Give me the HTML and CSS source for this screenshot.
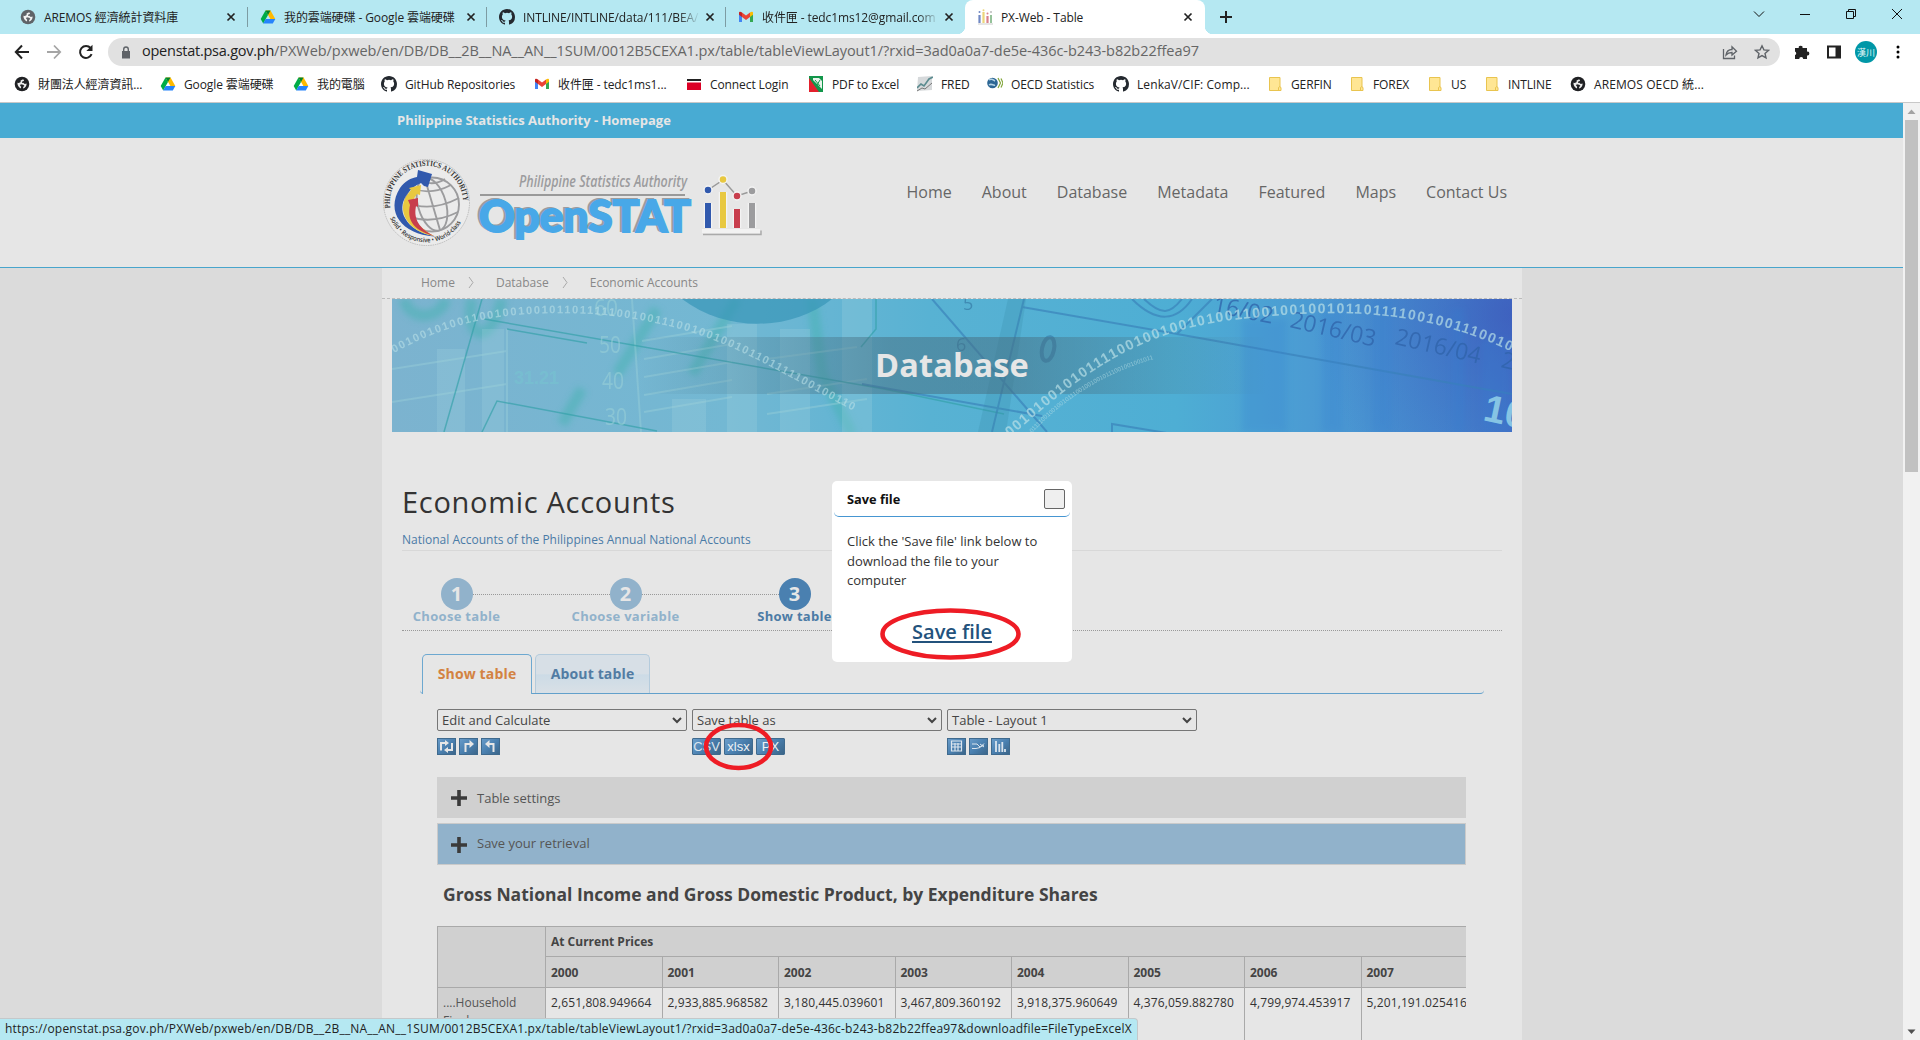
FILE: index.html
```html
<!DOCTYPE html>
<html lang="en">
<head>
<meta charset="utf-8">
<title>PX-Web - Table</title>
<link rel="stylesheet" href="styles.css">
</head>
<body>
<svg width="0" height="0" class="defs" aria-hidden="true">
  <defs>
    <symbol id="globe" viewBox="0 0 16 16"><circle cx="8" cy="8" r="7.300" fill="currentColor"/><path d="M8.500 2.300L6 3.800 6.500 5.500 4 6.800 2.300 6.500C2.200 10 4 12.500 6.500 13.500L7 11.500 5.500 9.800 6.500 8.300 9.500 8.800 11 10.300 9.500 11.800 9.300 13.600C12.500 12.800 14 10 13.700 7.500L11.500 8 9.500 6.500 8 6.800 8.300 5 10.300 4.300 10.500 2.800z" fill="#fff" opacity=".92" transform="translate(1.600 1.600) scale(.8)"/></symbol>
    <symbol id="drive" viewBox="0 0 16 16"><path d="M5.500 1.500h5L15.300 10h-4.900z" fill="#ffba00"/><path d="M5.500 1.500 8 5.900 3.200 14.400.7 10z" fill="#00ac47"/><path d="M5.600 10h9.700l-2.500 4.400H3.200z" fill="#2684fc"/><path d="M8 5.900 5.500 1.500h5z" fill="#00832d"/></symbol>
    <symbol id="github" viewBox="0 0 16 16"><path fill="#24292f" d="M8 0C3.580 0 0 3.580 0 8c0 3.540 2.290 6.530 5.470 7.590.4.070.55-.17.55-.38 0-.19-.01-.82-.01-1.490-2.010.37-2.530-.49-2.690-.94-.09-.23-.48-.94-.82-1.130-.28-.15-.68-.52-.01-.53.63-.01 1.080.58 1.230.82.72 1.210 1.870.87 2.330.66.070-.52.28-.87.51-1.070-1.780-.2-3.640-.89-3.640-3.950 0-.87.31-1.590.82-2.150-.08-.2-.36-1.020.08-2.120 0 0 .67-.21 2.200.82a7.420 7.420 0 0 1 4 0c1.530-1.040 2.200-.82 2.200-.82.44 1.100.16 1.920.08 2.120.51.56.82 1.270.82 2.150 0 3.070-1.870 3.750-3.650 3.950.29.25.54.73.54 1.480 0 1.070-.01 1.930-.01 2.200 0 .21.15.46.55.38A8.010 8.010 0 0 0 16 8c0-4.420-3.580-8-8-8"/></symbol>
    <symbol id="gmail" viewBox="0 0 16 16"><path d="M1 4v9h3V6.500z" fill="#4285f4"/><path d="M12 6.500V13h3V4z" fill="#34a853"/><path d="M4 3.500V8l4 3 4-3V3.500L8 6.500z" fill="#ea4335"/><path d="M1 3.700V5.800L4 8V3.500C2.600 2.300 1 2.700 1 3.700" fill="#c5221f"/><path d="M15 3.700V5.800L12 8V3.500c1.400-1.200 3-.8 3 .2" fill="#fbbc04"/></symbol>
    <symbol id="folder" viewBox="0 0 16 16"><path d="M2.500 1.500h10.500v9.500l1 .5v3H2.500z" fill="#ffe694" stroke="#e9c44f"/><path d="M11.500 14.500v-3l1.500-1" fill="none" stroke="#e9c44f"/></symbol>
    <symbol id="cross" viewBox="0 0 10 10"><path d="M1.500 1.500l7 7M8.500 1.500l-7 7" stroke="#222" stroke-width="1.700"/></symbol>
    <symbol id="plus" viewBox="0 0 16 16"><path d="M8 0v16M0 8h16" stroke="#3a3a3a" stroke-width="3.600"/></symbol>
    <linearGradient id="btn" x1="0" y1="0" x2="1" y2="1"><stop offset="0" stop-color="#6a9dca"/><stop offset=".5" stop-color="#4a80b0"/><stop offset="1" stop-color="#3b6487"/></linearGradient>
  </defs>
</svg>

<div class="window">
  <header class="tabstrip">
    <div class="tab"><svg class="ico grey"><use href="#globe"/></svg><span class="tab-title">AREMOS 經濟統計資料庫</span><svg class="x"><use href="#cross"/></svg></div>
    <div class="tab"><svg class="ico"><use href="#drive"/></svg><span class="tab-title">我的雲端硬碟 - Google 雲端硬碟</span><svg class="x"><use href="#cross"/></svg></div>
    <div class="tab"><svg class="ico"><use href="#github"/></svg><span class="tab-title fade">INTLINE/INTLINE/data/111/BEA/</span><svg class="x"><use href="#cross"/></svg></div>
    <div class="tab last"><svg class="ico"><use href="#gmail"/></svg><span class="tab-title fade">收件匣 - tedc1ms12@gmail.com</span><svg class="x"><use href="#cross"/></svg></div>
    <div class="tab active"><svg class="ico" viewBox="0 0 16 16"><path d="M2.500 6v8" stroke="#7088c4" stroke-width="2.200"/><path d="M6.500 3v11" stroke="#ecd67a" stroke-width="2.200"/><path d="M10.500 7v7" stroke="#d9808b" stroke-width="2.200"/><path d="M14 6v8" stroke="#95c29a" stroke-width="2"/><path d="M1 15h15" stroke="#ccc"/><circle cx="2.500" cy="3" r="1" fill="#7088c4"/><circle cx="6.500" cy="1.200" r="1" fill="#ecd67a"/><circle cx="10.500" cy="4.500" r="1" fill="#d9808b"/><circle cx="14" cy="3" r="1" fill="#bbb"/></svg><span class="tab-title">PX-Web - Table</span><svg class="x"><use href="#cross"/></svg></div>
    <svg class="newtab" viewBox="0 0 14 14"><path d="M7 1v12M1 7h12" stroke="#222" stroke-width="2"/></svg>
    <div class="controls">
      <svg viewBox="0 0 12 12"><path d="M1 3.500l5 5 5-5" class="ln"/></svg>
      <svg viewBox="0 0 12 12"><path d="M1 6.500h10" class="ln"/></svg>
      <svg viewBox="0 0 12 12"><path d="M1.500 3.500h7v7h-7zM3.500 3.500v-2h7v7h-2" class="ln"/></svg>
      <svg viewBox="0 0 12 12"><path d="M1 1l10 10M11 1L1 11" class="ln"/></svg>
    </div>
  </header>

  <div class="toolbar">
    <svg class="nav-ico" viewBox="0 0 16 16"><path d="M15 8H2M8 1.500L1.800 8 8 14.500" fill="none" stroke="#222" stroke-width="2"/></svg>
    <svg class="nav-ico" viewBox="0 0 16 16"><path d="M1 8h13M8 1.500L14.200 8 8 14.500" fill="none" stroke="#a5a5a5" stroke-width="1.800"/></svg>
    <svg class="nav-ico" viewBox="0 0 16 16"><path d="M13.600 10.200A6 6 0 1 1 12.600 4" fill="none" stroke="#222" stroke-width="2"/><path d="M14.500.8v6.200H8.300z" fill="#222"/></svg>
    <div class="address">
      <svg class="lock" viewBox="0 0 10 13"><path d="M1 5h8v7.500H1z" fill="#5f6368"/><path d="M2.700 5.500V3.300a2.300 2.300 0 0 1 4.600 0v2.200" fill="none" stroke="#5f6368" stroke-width="1.400"/></svg>
      <span class="url"><b>openstat.psa.gov.ph</b>/PXWeb/pxweb/en/DB/DB__2B__NA__AN__1SUM/0012B5CEXA1.px/table/tableViewLayout1/?rxid=3ad0a0a7-de5e-436c-b243-b82b22ffea97</span>
      <svg class="a-ico" viewBox="0 0 16 16"><path d="M1.500 5v9.500h11v-3M4 11c.5-3.500 3-5.500 6-5.500V2.800l4.500 4.400L10 11V8.500c-3 0-4.500.8-6 2.500z" fill="none" stroke="#5f6368" stroke-width="1.300"/></svg>
      <svg class="a-ico" viewBox="0 0 16 16"><path d="M8 1.800l1.900 4.100 4.500.5-3.400 3 1 4.400L8 11.600l-4 2.200 1-4.400-3.400-3 4.500-.5z" fill="none" stroke="#5f6368" stroke-width="1.400"/></svg>
    </div>
    <div class="tools">
      <svg class="t-ico" viewBox="0 0 16 16"><path d="M1 4h3.800a1.900 1.900 0 1 1 3.700 0H13v3.700a1.900 1.900 0 1 1 0 3.700V15H9.200a2 2 0 0 0-4 0H1v-3.900a2 2 0 0 0 0-3.700z" fill="#222"/></svg>
      <svg class="t-ico" viewBox="0 0 16 16"><path d="M2 2.500h12v11H2z" fill="none" stroke="#222" stroke-width="2"/><path d="M9.500 2h5v12h-5z" fill="#222"/></svg>
      <span class="avatar">漢川</span>
      <svg class="t-ico" viewBox="0 0 16 16"><circle cx="8" cy="3" r="1.500"/><circle cx="8" cy="8" r="1.500"/><circle cx="8" cy="13" r="1.500"/></svg>
    </div>
  </div>

  <nav class="bookmarks">
    <span class="bm"><svg class="ico dark"><use href="#globe"/></svg>財團法人經濟資訊...</span>
    <span class="bm"><svg class="ico"><use href="#drive"/></svg>Google 雲端硬碟</span>
    <span class="bm"><svg class="ico"><use href="#drive"/></svg>我的電腦</span>
    <span class="bm"><svg class="ico"><use href="#github"/></svg>GitHub Repositories</span>
    <span class="bm"><svg class="ico"><use href="#gmail"/></svg>收件匣 - tedc1ms1...</span>
    <span class="bm"><svg class="ico" viewBox="0 0 16 16"><path d="M1 5h14v9H1z" fill="#dc0025"/><path d="M1 3h14v2H1z" fill="#222"/><path d="M1 5h14v1.500H1z" fill="#fff"/></svg>Connect Login</span>
    <span class="bm"><svg class="ico" viewBox="0 0 16 16"><path d="M1 0h14v16H1z" fill="#12964a"/><path d="M1 2l10 14H1z" fill="#e3202c"/><path d="M5 2h6l3 3v8L5 4z" fill="#e9f4ec"/><path d="M7 4l5 6M12 4L9 9" stroke="#12964a"/></svg>PDF to Excel</span>
    <span class="bm"><svg class="ico" viewBox="0 0 16 16"><path d="M1 1l14-1v14L0 15z" fill="#d6d9db"/><path d="M0 12l4-4 3 2 5-7 4-2" stroke="#5b8b8f" fill="none" stroke-width="1.600"/><path d="M0 15l5-3 3 1 7-6" stroke="#777" fill="none"/></svg>FRED</span>
    <span class="bm"><svg class="ico" viewBox="0 0 16 16"><circle cx="5.500" cy="7" r="5.300" fill="#2c6694"/><path d="M2 4c3-2 4 0 6 1M2 9c3-2 4 1 6 0" stroke="#b5d3e6" fill="none" stroke-width="1.500"/><path d="M11 2l2.500 5L11 12M14 2.500L16 7l-2 4.500" fill="none" stroke="#83a63c" stroke-width="1.200"/></svg>OECD Statistics</span>
    <span class="bm wide"><svg class="ico"><use href="#github"/></svg>LenkaV/CIF: Comp...</span>
    <span class="bm"><svg class="ico"><use href="#folder"/></svg>GERFIN</span>
    <span class="bm"><svg class="ico"><use href="#folder"/></svg>FOREX</span>
    <span class="bm"><svg class="ico"><use href="#folder"/></svg>US</span>
    <span class="bm"><svg class="ico"><use href="#folder"/></svg>INTLINE</span>
    <span class="bm wide"><svg class="ico dark"><use href="#globe"/></svg>AREMOS OECD 統...</span>
  </nav>

  <div class="viewport">
    <main class="page">
      <div class="topbar">Philippine Statistics Authority - Homepage</div>
      <div class="masthead">
        <svg class="logo" width="390" height="100" viewBox="380 153 390 100">
          <defs>
            <path id="arcTop" d="M390.200 208A36.700 36.700 0 1 1 462.800 208"/>
            <path id="arcBot" d="M390 218A39.500 39.500 0 0 0 463 218"/>
          </defs>
          <circle cx="426.500" cy="202.500" r="43" fill="#ebebeb" stroke="#aaa" stroke-width=".7" stroke-dasharray="1.500 .8"/>
          <g fill="none" stroke="#9c9c9e" stroke-width="1.900">
            <circle cx="432" cy="204.500" r="27"/>
            <ellipse cx="432" cy="204.500" rx="14" ry="27" transform="rotate(-16 432 204.500)"/>
            <path d="M425 179 440 230M412 188q18 8 39-3M405 202q25 11 54-4M407 216q25 9 51-4M419 180q14 7 26-1"/>
          </g>
          <path d="M434 236.500C402 234 385 212 400 188c5-7 11-10 17-11l1-7 14 4-4 13-4-1-3-3c-12 5-24 20-16 35 5 10 17 16 29 18z" fill="#3159ad"/>
          <path d="M434 236c-26-4-39-26-26-42l3-4-2-2 12-3-1 10-3-1c-8 10-10 27 17 42z" fill="#e8c840"/>
          <path d="M434 236c-22-6-27-17-24-31l-2-5 10-2v9l-2-1c-2 10 0 21 18 30z" fill="#c83e4d"/>
          <text class="seal-top"><textPath href="#arcTop" textLength="119" lengthAdjust="spacingAndGlyphs">PHILIPPINE STATISTICS AUTHORITY</textPath></text>
          <text class="seal-bot"><textPath href="#arcBot" textLength="88" lengthAdjust="spacingAndGlyphs">Solid • Responsive • World-class</textPath></text>
          <text x="519" y="187" class="logo-sub" textLength="168" lengthAdjust="spacingAndGlyphs">Philippine Statistics Authority</text>
          <path d="M480 195h205" stroke="#999" stroke-width="2"/>
          <g class="shade"><text x="477" y="231" class="logo-name" textLength="212" lengthAdjust="spacingAndGlyphs">OpenSTAT</text></g>
          <text x="479" y="232" class="logo-name" textLength="212" lengthAdjust="spacingAndGlyphs">OpenSTAT</text>
          <path d="M703 234.500h58v-4" fill="none" stroke="#aaa" stroke-width="1.500"/><path d="M702 231h58" stroke="#f2f2f2" stroke-width="4"/>
          <path d="M708 190l15-10 14 16 15-5" fill="none" stroke="#999" stroke-width="1.500"/>
          <path d="M708 203v25M723 192v36M737 209v19M752 203v25" stroke="#f3f3f3" stroke-width="8.500"/>
          <path d="M708 203v25" stroke="#3159ad" stroke-width="6"/><path d="M723 192v36" stroke="#e8c840" stroke-width="6"/><path d="M737 209v19" stroke="#c83e4d" stroke-width="6"/><path d="M752 203v25" stroke="#9c9c9e" stroke-width="6"/>
          <g stroke="#f3f3f3" stroke-width="1.500"><circle cx="708" cy="190" r="4" fill="#3159ad"/><circle cx="723" cy="179.500" r="4" fill="#e8c840"/><circle cx="737" cy="196" r="4" fill="#c83e4d"/><circle cx="752" cy="191" r="4" fill="#9c9c9e"/></g>
        </svg>
        <nav class="mainnav"><a>Home</a><a>About</a><a>Database</a><a>Metadata</a><a>Featured</a><a>Maps</a><a>Contact Us</a></nav>
      </div>

      <div class="container">
        <div class="crumbs"><span>Home</span><svg class="chev"><path d="M1 1l4 5.500L1 12"/></svg><span>Database</span><svg class="chev"><path d="M1 1l4 5.500L1 12"/></svg><span>Economic Accounts</span></div>
        <div class="banner">
          <svg class="banner-art" width="1120" height="133" viewBox="0 0 1120 133">
            <defs>
              <linearGradient id="sea"><stop offset="0" stop-color="#7cb3cf"/><stop offset=".3" stop-color="#73b8d3"/><stop offset=".48" stop-color="#58b2d3"/><stop offset=".7" stop-color="#4eaed4"/><stop offset=".82" stop-color="#4b9bd3"/><stop offset=".95" stop-color="#4587ce"/><stop offset="1" stop-color="#4579c9"/></linearGradient>
              <radialGradient id="deep" cx="1120" cy="15" r="200" gradientUnits="userSpaceOnUse"><stop offset="0" stop-color="#3a52b8" stop-opacity=".6"/><stop offset="1" stop-color="#3a62c0" stop-opacity="0"/></radialGradient>
              <linearGradient id="band"><stop offset="0" stop-color="#466f82" stop-opacity="0"/><stop offset=".4" stop-color="#466f82" stop-opacity=".52"/><stop offset=".6" stop-color="#466f82" stop-opacity=".52"/><stop offset="1" stop-color="#466f82" stop-opacity="0"/></linearGradient>
              <filter id="soft"><feGaussianBlur stdDeviation="3"/></filter>
              <path id="c1" d="M2 54C70 16 130 12 200 15C320 25 360 60 462 112"/>
              <path id="c2" d="M618 138C680 85 740 28 860 19C960 8 1040 14 1122 54"/>
              <path id="c3" d="M640 134Q690 80 765 59"/>
            </defs>
            <path d="M0 0h1120v133H0z" fill="url(#sea)"/>
            <path d="M0 0h1120v133H0z" fill="url(#deep)"/>
            <g fill="none" stroke="#45b2b0" stroke-width="11" opacity=".5" filter="url(#soft)"><path d="M12 0c5 22 35 22 42 0M80 0c-8 40 18 50 30 0M265 10L225 75M345 0l-45 75M190 90l-20 35M420 0l10 75 30 60"/></g>
            <path d="M290 0c45 34 110 32 150 0z" fill="#3795b8" opacity=".7"/>
            <g fill="#a3d4df" opacity=".25"><path d="M45 50h28v83H45zM90 30h22v103H90zM280 100h34v33h-34zM335 25h30v108h-30zM388 30h30v103h-30zM450 0h30v133h-30z"/></g>
            <g fill="none" stroke="#9ed1da" stroke-width="2" opacity=".4"><path d="M240 0l9 133M250 42l90-15M252 60l88-15M252 78l88-15M252 96l88-15M252 113l88-15M375 115l100-15M375 95l100-15M375 60l90-12M0 70l115-18M0 103l115-18M115 30v103"/></g>
            <g fill="none" stroke="#319fa7" stroke-width="1.500" opacity=".65"><path d="M90 0L52 133M92 20l400 70 120 25M90 133l15-31 160 30M115 30l80 14M484 0v30l-15 18"/></g>
            <g fill="none" stroke="#397fb8" stroke-width="2" opacity=".65"><path d="M540 0l115 133M632 0L600 133M630 8l155 27 35-35M740 0c25 25 45 22 60 0M752 0c18 17 26 15 38 0M785 35l335 60M720 133v-8l85 14M470 85l180 32"/></g>
            <path d="M586 133l30-133h18l-20 133z" fill="#388aa8" opacity=".25"/>
            <g fill="#3680d0" opacity=".25" filter="url(#soft)"><path d="M850 20h45v113h-45zM930 10h20v123h-20zM980 0h20v133h-20zM1060 10h12v123h-12zM1090 40h28v93h-28z"/></g>
            <g class="scale" fill="#9cd2d8" opacity=".55"><text x="202" y="17" textLength="24" lengthAdjust="spacingAndGlyphs">60</text><text x="207" y="54" textLength="22" lengthAdjust="spacingAndGlyphs">50</text><text x="210" y="90" textLength="22" lengthAdjust="spacingAndGlyphs">40</text><text x="213" y="126" textLength="22" lengthAdjust="spacingAndGlyphs">30</text></g>
            <g class="glyph" fill="#3477a3" opacity=".65"><text x="571" y="11">5</text><text x="564" y="52">6</text></g>
            <ellipse cx="656" cy="50" rx="6" ry="12" transform="rotate(12 656 50)" fill="none" stroke="#3477a3" stroke-width="4" opacity=".6"/>
            <g class="dates" fill="#2f63aa" opacity=".75"><text x="820" y="13" transform="rotate(11 820 13)">16/02</text><text x="897" y="28" transform="rotate(13 897 28)">2016/03</text><text x="1002" y="45" transform="rotate(13 1002 45)">2016/04</text><text x="1108" y="68" transform="rotate(13 1108 68)">2</text></g>
            <path d="M245 38h630v57H245z" fill="url(#band)"/>
            <g fill="#b9e0e7"><text class="bits" opacity=".6"><textPath href="#c1" textLength="486">0010010100110010010010110111110010011100100100101101111100100110</textPath></text><text class="bits big" opacity=".7"><textPath href="#c2" textLength="568">00101001010111100100100101001100100100101101111001001110010010</textPath></text><text class="tiny" opacity=".6"><textPath href="#c3" textLength="144">0111100100100101110010010010111001001001011</textPath></text></g>
            <text x="1090" y="121" class="huge" transform="rotate(12 1090 121)">10</text>
            <text x="122" y="85" class="soft" fill="#76cbd0">31.21</text>
          </svg>
          <h1>Database</h1>
        </div>

        <div class="content">
          <h2>Economic Accounts</h2>
          <p class="path">National Accounts of the Philippines Annual National Accounts</p>
          <div class="steps">
            <div class="step"><i>1</i><span>Choose table</span></div>
            <div class="step"><i>2</i><span>Choose variable</span></div>
            <div class="step on"><i>3</i><span>Show table</span></div>
          </div>
          <div class="tabs"><span class="pill cur">Show table</span><span class="pill">About table</span></div>
          <div class="tools-grid">
            <div><div class="select">Edit and Calculate<svg viewBox="0 0 10 7"><path d="M1 1l4 4 4-4"/></svg></div>
              <div class="btns">
                <svg width="19" height="17" viewBox="0 0 19 17"><rect class="b" x=".5" y=".5" width="18" height="16"/><path class="w" d="M4 12.500V5h5M15 5v7H9.500"/><path class="f" d="M8 2l4 3-4 3zM11 9l-4 3 4 3z"/></svg>
                <svg width="19" height="17" viewBox="0 0 19 17"><rect class="b" x=".5" y=".5" width="18" height="16"/><path class="w" d="M6.500 14V6H11"/><path class="f" d="M10.500 2l4.500 4-4.500 4z"/></svg>
                <svg width="19" height="17" viewBox="0 0 19 17"><rect class="b" x=".5" y=".5" width="18" height="16"/><path class="w" d="M12.500 14V6H8"/><path class="f" d="M8.500 2L4 6l4.500 4z"/></svg>
              </div></div>
            <div><div class="select">Save table as<svg viewBox="0 0 10 7"><path d="M1 1l4 4 4-4"/></svg></div>
              <div class="btns"><span class="fmt">CSV</span><span class="fmt">xlsx</span><span class="fmt">PX</span></div></div>
            <div><div class="select">Table - Layout 1<svg viewBox="0 0 10 7"><path d="M1 1l4 4 4-4"/></svg></div>
              <div class="btns">
                <svg width="19" height="17" viewBox="0 0 19 17"><rect class="b" x=".5" y=".5" width="18" height="16"/><path d="M4.500 3h10v10h-10zM5 6h9M5 9h9M8 5v8M11 5v8" fill="none" stroke="#dbe5ee" stroke-width="1.200"/></svg>
                <svg width="19" height="17" viewBox="0 0 19 17"><rect class="b" x=".5" y=".5" width="18" height="16"/><path d="M3 6h5l3 3 4-2M3 10.500h4l4-1 4-4M11 6l4 3" fill="none" stroke="#dbe5ee"/></svg>
                <svg width="19" height="17" viewBox="0 0 19 17"><rect class="b" x=".5" y=".5" width="18" height="16"/><path d="M5 3v11M8.300 6v8M11.300 4v10M14 11v3" fill="none" stroke="#dbe5ee" stroke-width="1.800"/></svg>
              </div></div>
          </div>
          <div class="acc"><svg class="pl"><use href="#plus"/></svg>Table settings</div>
          <div class="acc blue"><svg class="pl"><use href="#plus"/></svg><span>Save your retrieval</span></div>
          <h3>Gross National Income and Gross Domestic Product, by Expenditure Shares</h3>
          <div class="table-wrap">
            <table>
              <colgroup><col class="c-stub"><col span="8" class="c-num"></colgroup>
              <tr class="r1"><th rowspan="2"></th><th colspan="8">At Current Prices</th></tr>
              <tr class="r2"><th>2000</th><th>2001</th><th>2002</th><th>2003</th><th>2004</th><th>2005</th><th>2006</th><th>2007</th></tr>
              <tr class="r3"><th class="stub">....Household Final</th><td>2,651,808.949664</td><td>2,933,885.968582</td><td>3,180,445.039601</td><td>3,467,809.360192</td><td>3,918,375.960649</td><td>4,376,059.882780</td><td>4,799,974.453917</td><td>5,201,191.025416</td></tr>
            </table>
          </div>
        </div>
      </div>
    </main>
    <div class="scrollbar"><svg class="arrow" viewBox="0 0 17 17"><path d="M4.500 11h8L8.500 6.500z" fill="#a3a3a3"/></svg><div class="thumb"></div><svg class="arrow down" viewBox="0 0 17 17"><path d="M4.500 6.500h8L8.500 11z" fill="#505050"/></svg></div>
  </div>
</div>

<div class="modal">
  <div class="modal-head">Save file<span class="close"></span></div>
  <p>Click the 'Save file' link below to download the file to your computer</p>
  <a>Save file</a>
</div>
<svg class="marks" width="1920" height="1040"><ellipse cx="950.500" cy="634" rx="68" ry="23.500"/><ellipse cx="738.500" cy="746.500" rx="32.500" ry="21.500"/></svg>
<div class="status">https://openstat.psa.gov.ph/PXWeb/pxweb/en/DB/DB__2B__NA__AN__1SUM/0012B5CEXA1.px/table/tableViewLayout1/?rxid=3ad0a0a7-de5e-436c-b243-b82b22ffea97&amp;downloadfile=FileTypeExcelX</div>
</body>
</html>
```
FILE: styles.css
```css
* { box-sizing: border-box; }
body { margin: 0; width: 1920px; height: 1040px; overflow: hidden; position: relative; font-family: "Open Sans", "Noto Sans CJK TC", sans-serif; font-size: 12px; color: #444; }
svg { flex: none; display: block; }
.defs { position: absolute; }
.window { display: flex; flex-direction: column; height: 1040px; }

/* browser chrome */
.tabstrip { height: 34px; background: #b5e8f2; display: flex; align-items: flex-end; padding-left: 8px; flex: none; color: #222; }
.tab { width: 239px; height: 34px; display: flex; align-items: center; padding: 0 10px 0 12px; position: relative; }
.tab:first-child { width: 240px; }
.tab:not(.last):not(.active)::after { content: ""; position: absolute; right: 0; top: 7px; width: 1px; height: 20px; background: #7d9ca3; }
.tab.active { width: 240px; background: #fff; border-radius: 8px 8px 0 0; }
.tab.active::before, .tab.active::after { content: ""; position: absolute; bottom: 0; width: 8px; height: 8px; }
.tab.active::before { left: -8px; background: radial-gradient(circle at 0 0, transparent 8px, #fff 8.5px); }
.tab.active::after { right: -8px; background: radial-gradient(circle at 100% 0, transparent 8px, #fff 8.5px); }
.ico { width: 16px; height: 16px; }
.grey { color: #5f6368; }
.dark { color: #202124; }
.tab-title { margin-left: 8px; width: 177px; flex: none; overflow: hidden; white-space: nowrap; letter-spacing: -.1px; }
.fade { -webkit-mask-image: linear-gradient(90deg, #000 88%, transparent); mask-image: linear-gradient(90deg, #000 88%, transparent); }
.x { width: 10px; height: 10px; margin-left: 5px; }
.newtab { width: 14px; height: 14px; margin: 0 0 10px 14px; }
.controls { display: flex; gap: 34px; margin: 0 17px 14px auto; }
.controls svg { width: 12px; height: 12px; }
.ln { fill: none; stroke: #111; stroke-width: 1; }
.toolbar { height: 36px; background: #fff; display: flex; align-items: center; flex: none; padding-left: 14px; }
.nav-ico { width: 16px; height: 16px; margin-right: 16px; }
.address { width: 1672px; height: 28px; margin-left: -2px; border-radius: 14px; background: #e1e1e1; display: flex; align-items: center; padding: 0 10px 0 13px; }
.lock { width: 10px; height: 13px; }
.url { flex: 1; margin-left: 11px; font-size: 14.500px; line-height: 20px; margin-top: -2px; color: #666; white-space: nowrap; letter-spacing: -.05px; }
.url b { font-weight: 400; color: #222; letter-spacing: -.25px; }
.a-ico { width: 16px; height: 16px; margin-left: 16px; }
.tools { display: flex; align-items: center; gap: 16px; margin-left: 14px; }
.t-ico { width: 16px; height: 16px; }
.avatar { width: 22px; height: 22px; margin: 0 -3px; border-radius: 50%; background: #0097a7; color: #e5f7f8; font-size: 9px; display: flex; align-items: center; justify-content: center; }
.bookmarks { height: 33px; background: #fff; border-bottom: 1px solid #c8c8c8; display: grid; grid-template-columns: 146px 133px 88px 153px 152px 122px 109px 70px 126px 154px 82px 78px 57px 86px 150px; align-items: center; padding: 0 0 4px 14px; flex: none; color: #222; }
.bm { display: flex; align-items: center; gap: 8px; white-space: nowrap; letter-spacing: -.1px; }
.wide { letter-spacing: .1px; }

/* page */
.viewport { flex: 1; display: flex; min-height: 0; }
.page { width: 1903px; background: #dbdbdb; overflow: hidden; }
.topbar { height: 35px; background: #48abd3; color: #e6e6e6; font-weight: 700; font-size: 13px; line-height: 35px; padding-left: 397px; letter-spacing: -.02px; }
.masthead { height: 130px; background: #e6e6e6; border-bottom: 1px solid #48a5cc; display: flex; padding: 15px 0 0 380px; }
.logo-sub { font: italic 600 16px "Open Sans", sans-serif; fill: #9c9c9e; }
.logo-name { font: 900 43px Lato, sans-serif; fill: #48a8e8; stroke: #48a8e8; stroke-width: 1.8px; }
.shade .logo-name { fill: #9c9c9e; stroke: #9c9c9e; }
.seal-top { font: 700 8px "Liberation Serif", serif; fill: #333; }
.seal-bot { font: 600 6.5px "Open Sans", sans-serif; fill: #333; }
.mainnav { display: flex; gap: 30px; margin: 27px 0 0 136.500px; font-size: 16px; line-height: 24px; color: #666; }
.container { width: 1140px; height: 800px; margin-left: 382px; background: #e6e6e6; }
.crumbs { height: 31px; border-bottom: 1px dashed #bbb; display: flex; align-items: center; padding: 0 0 1px 39px; font-size: 12px; color: #888; }
.chev { width: 7px; height: 13px; margin: 0 21px 0 13px; fill: none; stroke: #aaa; }
.banner { width: 1120px; height: 133px; margin-left: 10px; display: grid; place-items: center; }
.banner > * { grid-area: 1 / 1; }
.banner h1 { margin: 0 0 2px; font-size: 32.500px; line-height: 40px; color: #e6e6e6; z-index: 1; letter-spacing: .1px; }
.scale { font: 24px "Open Sans", sans-serif; }
.glyph { font: 18px "Open Sans", sans-serif; }
.dates { font: 23px "Open Sans", sans-serif; }
.bits { font: 700 11px "Liberation Sans", sans-serif; }
.bits.big { font-size: 14px; }
.tiny { font: 6px "Liberation Sans", sans-serif; }
.huge { font: 700 38px "Liberation Sans", sans-serif; fill: #86c4e4; }
.soft { font: 700 18px "Liberation Sans", sans-serif; opacity: .4; }
.content { padding: 46px 20px 0; }
h2 { margin: 0; font-size: 29px; line-height: 48px; font-weight: 400; color: #333; letter-spacing: .7px; }
.path { margin: 4px 0 0; height: 21px; line-height: 20px; font-size: 12px; color: #4a7ba6; border-bottom: 1px solid #d8d8d8; }
.steps { height: 80px; display: flex; padding-top: 27px; border-bottom: 1px dotted #999; }
.step { width: 169px; display: flex; flex-direction: column; align-items: center; position: relative; color: #91b2cb; font-weight: 700; font-size: 13px; line-height: 14px; letter-spacing: .3px; }
.steps .step:first-child { margin-left: -30px; }
.step span { margin-top: -1px; white-space: nowrap; }
.step i { width: 32px; height: 32px; border-radius: 50%; background: #91b2cb; color: #e6e6e6; font: 700 20px/31px "Open Sans", sans-serif; text-align: center; letter-spacing: 0; }
.step:not(.on)::after { content: ""; position: absolute; left: 101px; width: 137px; top: 16px; border-top: 1px dotted #999; }
.step.on { color: #4c7ba5; }
.step.on i { background: #4a80b0; }
.tabs { height: 40px; margin: 23px 18px 0 18px; padding-left: 2px; display: flex; gap: 3px; border-bottom: 1px solid #62a0cb; border-radius: 0 0 4px 4px; }
.pill { width: 115px; height: 39px; border: 1px solid #b4cbdc; border-bottom: 0; border-radius: 5px 5px 0 0; background: linear-gradient(#d7dfe6 50%, #ccdbe6 52%, #d9e0e6); font-size: 14px; font-weight: 700; line-height: 38px; text-align: center; letter-spacing: .15px; color: #527ca3; }
.pill.cur { width: 110px; height: 40px; border-color: #6da8d0; background: #e6e6e6; color: #d38242; }
.tools-grid { display: grid; grid-template-columns: repeat(3, 250px); gap: 5px; margin: 15px 0 0 35px; }
.select { height: 22px; border: 1px solid #767676; border-radius: 2px; display: flex; align-items: center; justify-content: space-between; padding: 0 4px; font-size: 13px; color: #444; }
.select svg { width: 10px; height: 7px; fill: none; stroke: #444; stroke-width: 2; }
.btns { display: flex; gap: 3px; margin-top: 7px; }
.b { fill: url(#btn); stroke: #3f6a8e; }
.w { fill: none; stroke: #e6e6e6; stroke-width: 2; }
.f { fill: #e6e6e6; }
.fmt { width: 29px; height: 17px; border: 1px solid #3f6a8e; border-radius: 1px; background: linear-gradient(135deg, #6a9dca, #4a80b0 50%, #3b6487); color: #dbe5ee; font: 13px/15px "Liberation Sans", sans-serif; text-align: center; white-space: nowrap; }
.fmt + .fmt { color: #edf2f6; }
.acc { width: 1029px; height: 41px; margin: 22px 0 0 35px; background: #d0d0d0; display: flex; align-items: center; padding-left: 14px; gap: 10px; font-size: 13px; color: #555; }
.acc.blue { margin-top: 5px; height: 42px; background: #91b2cb; border: 1px solid #cacaca; padding-left: 13px; }
.acc.blue .pl { margin-top: 2px; }
.acc.blue span { margin-top: -2px; }
.pl { width: 16px; height: 16px; }
h3 { margin: 13px 0 0 41px; font-size: 17.500px; line-height: 32px; color: #444; white-space: nowrap; }
.table-wrap { width: 1029px; margin: 16px 0 0 35px; overflow: hidden; }
table { border-collapse: collapse; table-layout: fixed; width: 1040px; font-size: 12px; }
.c-stub { width: 108px; }
.c-num { width: 116.500px; }
th, td { border: 1px solid #a9a9a9; padding: 0 5px; text-align: left; white-space: nowrap; }
th { background: #d0d0d0; color: #444; }
td { color: #333; vertical-align: top; line-height: 30px; letter-spacing: .12px; }
.r1 { height: 30px; } .r2 { height: 31px; } .r3 { height: 60px; }
th.stub { font-weight: 400; white-space: normal; line-height: 18px; padding-top: 6px; vertical-align: top; color: #555; }
.scrollbar { width: 17px; background: #f1f1f1; display: flex; flex-direction: column; align-items: center; }
.arrow { width: 17px; height: 17px; }
.thumb { width: 13px; height: 352px; background: #c1c1c1; }
.down { margin-top: auto; }

/* overlays */
.modal { position: absolute; left: 832px; top: 481px; width: 240px; height: 181px; background: #fff; border-radius: 5px; padding: 0 2px; color: #333; }
.modal-head { height: 36px; border-bottom: 1px solid #4696d2; border-radius: 5px; padding: 0 5px 0 13px; display: flex; align-items: center; justify-content: space-between; font-size: 12.800px; font-weight: 700; color: #111; }
.close { width: 21px; height: 20px; border: 1px solid #666; border-radius: 2px; background: #efefef; }
.modal p { margin: 15px 10px 0 13px; font-size: 13px; line-height: 19.500px; width: 200px; }
.modal a { display: block; margin-top: 26px; text-align: center; font-size: 20px; font-weight: 600; line-height: 30px; color: #23527c; text-decoration: underline; text-underline-offset: 2px; }
.marks { position: absolute; left: 0; top: 0; pointer-events: none; fill: none; stroke: #ee1c25; stroke-width: 4.6; }
.status { position: absolute; left: 0; bottom: 0; width: 1138px; height: 22px; background: #b5e8f2; border: 1px solid #c4c8ca; border-width: 1px 1px 0 0; border-radius: 0 4px 0 0; padding-left: 5px; line-height: 20px; font-size: 12px; letter-spacing: .19px; color: #222; white-space: nowrap; }
```
